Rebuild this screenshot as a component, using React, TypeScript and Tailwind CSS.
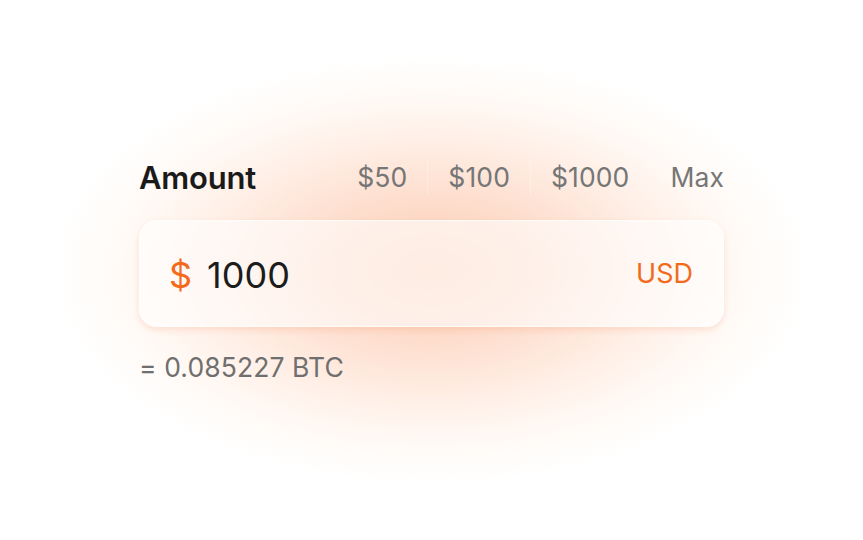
import { FC } from "react";

const presets = ["$50", "$100", "$1000", "Max"];

const App: FC = () => {
  return (
    <div className="flex h-[540px] w-full items-center justify-center bg-white bg-[radial-gradient(ellipse_380px_215px_at_50%_50%,#fcd0b8_0%,#fdd9c6_25%,#fee5d8_45%,#fff1e9_64%,#fffaf6_82%,#ffffff_100%)] font-['Inter',sans-serif]">
      <div className="mt-[3px] flex w-[585px] flex-col">
        <div className="flex h-[36px] items-center justify-between">
          <span className="text-[31px] font-semibold tracking-[-0.2px] text-[#1a1a1a]">
            Amount
          </span>
          <div className="flex items-center">
            {presets.map((p, i) => (
              <div key={p} className="flex items-center">
                {i > 0 && <div className="h-[36px] w-px bg-white/30" />}
                <button
                  className={`text-[26.5px] tracking-[0.1px] text-[#767676] ${
                    i === presets.length - 1 ? "pl-5" : "px-5"
                  } ${i === 0 ? "pl-0" : ""}`}
                >
                  {p}
                </button>
              </div>
            ))}
          </div>
        </div>

        <div className="mt-6 flex h-[107px] items-center justify-between rounded-[18px] border border-white/70 bg-white/60 pl-[29px] pr-[30px] shadow-[0_3px_6px_rgba(240,130,80,0.2)]">
          <div className="flex items-center gap-[15px] pt-[2px]">
            <span className="text-[36px] text-[#f46a1a]">$</span>
            <span className="text-[36px] font-normal text-[#1c1c1c]">1000</span>
          </div>
          <span className="pt-[2px] text-[27px] font-normal text-[#f26b1d]">USD</span>
        </div>

        <div className="mt-[24px] h-[32px] text-[26.5px] leading-[32px] tracking-[0.1px] text-[#6f6f6f]">
          = 0.085227 BTC
        </div>
      </div>
    </div>
  );
};

export default App;
